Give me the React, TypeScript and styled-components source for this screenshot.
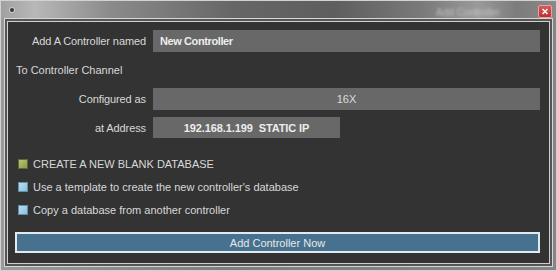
import styled, { createGlobalStyle } from "styled-components";

const GlobalStyle = createGlobalStyle`
    html, body {
        margin: 0;
        padding: 0;
        background: #ffffff;
    }
    body {
        font-family: "Liberation Sans", Arial, sans-serif;
    }
`;

const Window = styled.div`
    width: 557px;
    height: 271px;
    box-sizing: border-box;
    border: 1px solid #d2d2d2;
    background: linear-gradient(90deg, #9a9a9a 0%, #7e7e7e 40%, #858585 100%);
    display: flex;
    flex-direction: column;
`;

const TitleBar = styled.div`
    height: 17px;
    flex: none;
    display: flex;
    align-items: flex-start;
    padding: 0 4px 0 8px;
    background: linear-gradient(
        90deg,
        #a0a0a0 0%,
        #b8b8b8 6%,
        #8a8a8a 20%,
        #666666 42%,
        #5e5e5e 60%,
        #7a7a7a 76%,
        #9a9a9a 86%,
        #7c7c7c 93%,
        #8a8a8a 100%
    );
`;

const AppDot = styled.div`
    width: 4px;
    height: 4px;
    margin-top: 7px;
    margin-left: 1px;
    border-radius: 50%;
    background: #3a3a3a;
    box-shadow: 0 0 0 1px #c8c8c8;
`;

const BlurTitle = styled.div`
    margin-left: auto;
    margin-right: 38px;
    margin-top: 6px;
    font-size: 10px;
    color: rgba(235, 235, 235, 0.55);
    filter: blur(1.4px);
`;

const CloseBtn = styled.div`
    width: 14px;
    height: 13px;
    margin-top: 4px;
    box-sizing: border-box;
    border: 1px solid #e8a0a0;
    border-radius: 2px;
    background: linear-gradient(#d65a5a, #b83232);
    display: flex;
    align-items: center;
    justify-content: center;
`;

const Body = styled.div`
    flex: 1;
    padding: 0 3px 3px 3px;
    display: flex;
`;

const Frame = styled.div`
    flex: 1;
    border: 1px solid #d6d6d6;
    padding: 2px;
    background: #555555;
    display: flex;
`;

const Panel = styled.div`
    flex: 1;
    border: 1px solid #cfcfcf;
    background: #333333;
    display: flex;
    flex-direction: column;
    padding: 8px 9px 0 0;
    color: #d8d8d8;
    font-size: 11px;
`;

const Row = styled.div<{ $h: number; $gap?: number }>`
    display: grid;
    grid-template-columns: 138px 1fr;
    column-gap: 7px;
    height: ${p => p.$h}px;
    margin-top: ${p => p.$gap ?? 0}px;
`;

const Label = styled.div`
    display: flex;
    align-items: center;
    justify-content: flex-end;
    letter-spacing: -0.1px;
`;

const Field = styled.div<{ $w?: number; $center?: boolean; $bold?: boolean; $ls?: number }>`
    width: ${p => (p.$w ? `${p.$w}px` : "auto")};
    background: #686868;
    display: flex;
    align-items: center;
    justify-content: ${p => (p.$center ? "center" : "flex-start")};
    padding-left: ${p => (p.$center ? 0 : 7)}px;
    color: ${p => (p.$bold ? "#ededed" : "#dcdcdc")};
    font-weight: ${p => (p.$bold ? 700 : 400)};
    letter-spacing: ${p => p.$ls ?? 0}px;
    white-space: pre;
`;

const Heading = styled.div`
    height: 36px;
    display: flex;
    align-items: center;
    padding-left: 8px;
`;

const Options = styled.div`
    margin-top: 14px;
    display: flex;
    flex-direction: column;
`;

const Option = styled.div`
    height: 23px;
    display: flex;
    align-items: center;
    gap: 5px;
    padding-left: 10px;
`;

const Box = styled.div<{ $green?: boolean }>`
    width: 10px;
    height: 10px;
    box-sizing: border-box;
    border: 1px solid ${p => (p.$green ? "#5d6b2c" : "#5d8fae")};
    background: ${p =>
        p.$green
            ? "linear-gradient(135deg, #b9c77c, #8b9a45)"
            : "linear-gradient(135deg, #b8dcf0, #8cc0de)"};
`;

const AddBtn = styled.div`
    margin: 11px 0 0 7px;
    height: 21px;
    box-sizing: border-box;
    border: 2px solid #e2eaf0;
    background: #46728f;
    color: #e8e8e8;
    display: flex;
    align-items: center;
    justify-content: center;
`;

export default function App() {
    return (
        <>
            <GlobalStyle />
            <Window>
                <TitleBar>
                    <AppDot />
                    <BlurTitle>Add Controller</BlurTitle>
                    <CloseBtn>
                        <svg width="8" height="7" viewBox="0 0 8 7">
                            <path d="M1.5 1 L6.5 6 M6.5 1 L1.5 6" stroke="#fff2f2" strokeWidth="1.6" />
                        </svg>
                    </CloseBtn>
                </TitleBar>
                <Body>
                    <Frame>
                        <Panel>
                            <Row $h={22}>
                                <Label>Add A Controller named</Label>
                                <Field $bold $ls={-0.4}>New Controller</Field>
                            </Row>
                            <Heading>To Controller Channel</Heading>
                            <Row $h={22}>
                                <Label>Configured as</Label>
                                <Field $center>16X</Field>
                            </Row>
                            <Row $h={21} $gap={7}>
                                <Label>at Address</Label>
                                <Field $w={187} $center $bold $ls={-0.1}>192.168.1.199  STATIC IP</Field>
                            </Row>
                            <Options>
                                <Option>
                                    <Box $green />
                                    CREATE A NEW BLANK DATABASE
                                </Option>
                                <Option>
                                    <Box />
                                    Use a template to create the new controller's database
                                </Option>
                                <Option>
                                    <Box />
                                    Copy a database from another controller
                                </Option>
                            </Options>
                            <AddBtn>Add Controller Now</AddBtn>
                        </Panel>
                    </Frame>
                </Body>
            </Window>
        </>
    );
}
